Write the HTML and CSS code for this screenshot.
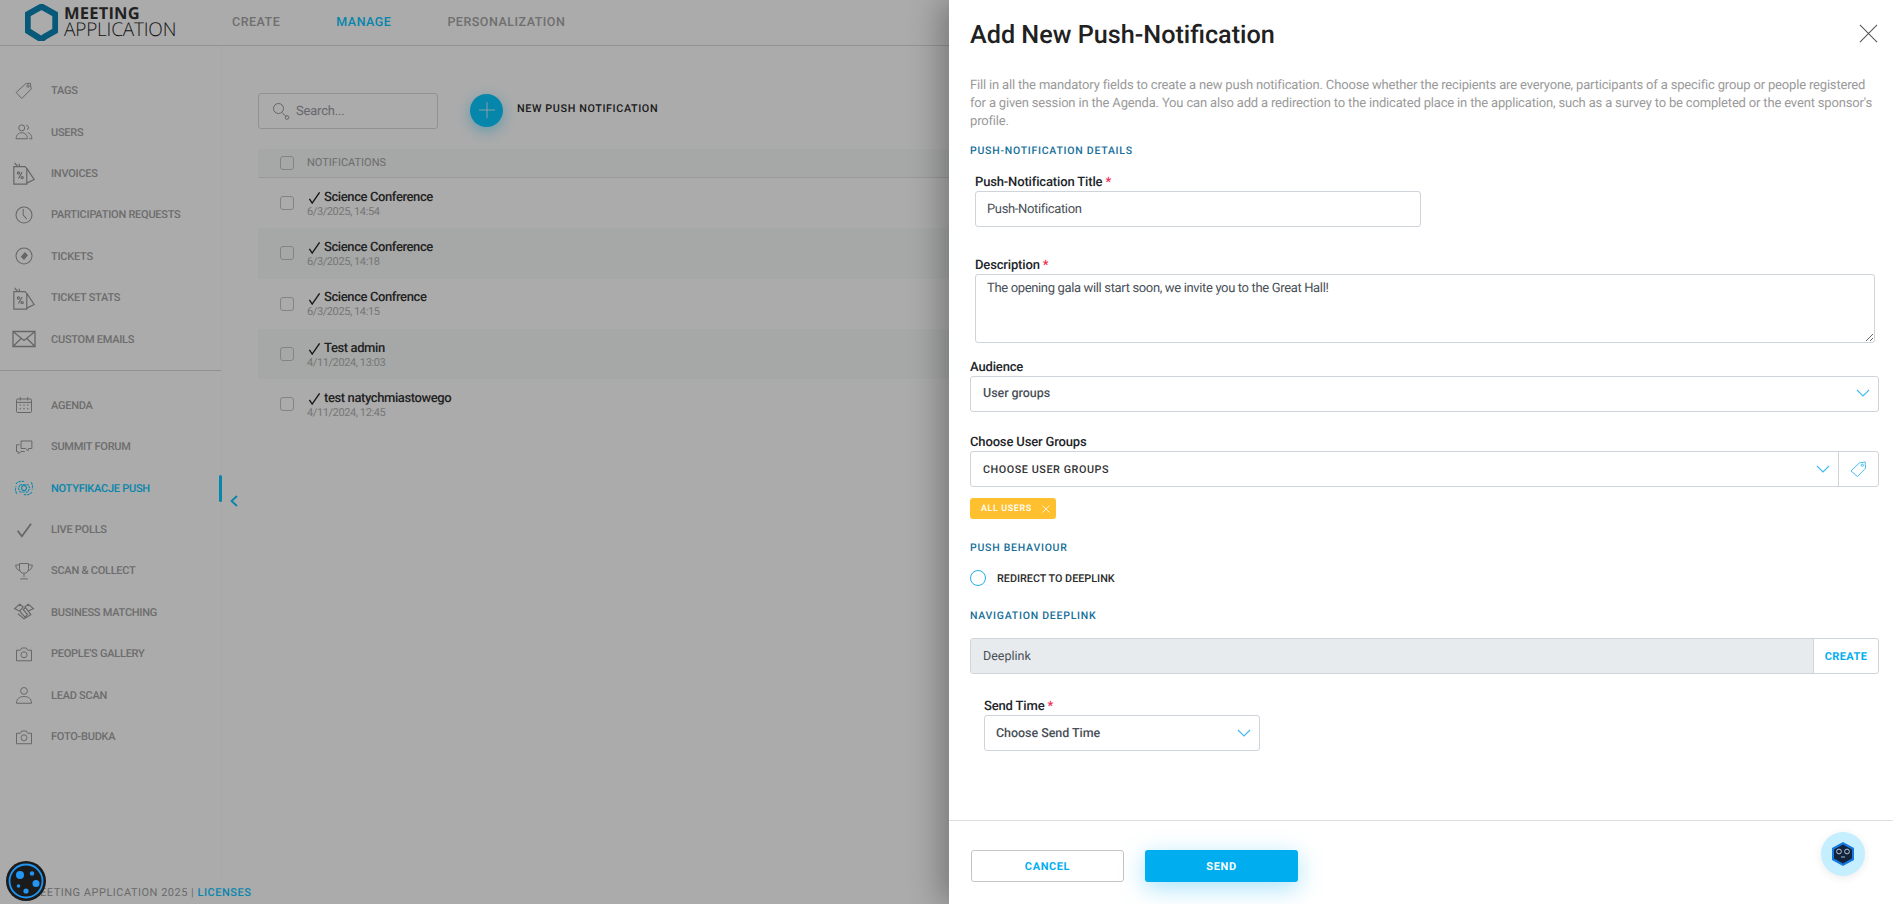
FILE: index.html
```html
<!DOCTYPE html>
<html lang="en">
<head>
<meta charset="utf-8">
<title>Meeting Application</title>
<link rel="stylesheet" href="styles.css">
</head>
<body>
<svg class="defs" width="0" height="0" aria-hidden="true">
  <symbol id="i-tag" viewBox="-4 -4 32 32"><path d="M1.500 14 14 2.500l6.500-1 1 8L9 22z"/><circle cx="17.500" cy="5.500" r="1.600"/></symbol>
  <symbol id="i-users" viewBox="-4 -4 32 32"><circle cx="9" cy="6.500" r="4"/><path d="M1.500 21c0-5 3-8 7.500-8s7.500 3 7.500 8z"/><path d="M15 3c2 .3 3.200 1.800 3 3.500-.2 1.200-1 2-2 2.500M17 13c3.500.8 5.500 3.500 5.500 8H19"/></symbol>
  <symbol id="i-invoice" viewBox="-1 -1 26 26"><path d="M1 5h12l2 2v17H1zM15 7l8 12-8 4M5 4C3 3 2 2 2 1M10 11l-4 7"/><circle cx="6" cy="12" r="1.200"/><circle cx="10" cy="17" r="1.200"/><path d="M7 5V2"/></symbol>
  <symbol id="i-clock" viewBox="-3 -3 30 30"><circle cx="12" cy="12" r="10"/><path d="M11 4.500V12l4.500 5"/></symbol>
  <symbol id="i-ticket" viewBox="-3 -3 30 30"><circle cx="12" cy="12" r="10"/><path class="solid" d="m13 7 4 4-5 6-4-4z"/></symbol>
  <symbol id="i-mail" viewBox="0 0 24 24"><path d="M1 4.500h22v15H1zM1 4.500l11 9 11-9M1 19.500l8-8M23 19.500l-8-8"/></symbol>
  <symbol id="i-calendar" viewBox="-4 -4 32 32"><rect x="2" y="4" width="20" height="18" rx="1.500"/><path d="M7 1.500V6M17 1.500V6M2 8.500h20"/><path class="dots" d="M6 12h2M11 12h2M16 12h2M6 17h2M11 17h2M16 17h2"/></symbol>
  <symbol id="i-chat" viewBox="-4 -4 32 32"><path d="M8 4h14.500v10H18l-.5 3-3.500-3H8z"/><path d="M6 9H2v9h2l.5 3 3.500-3h5"/></symbol>
  <symbol id="i-push" viewBox="-3 -3 30 30"><circle cx="12" cy="12" r="3"/><path d="M7 8h10l2 4-2 5H7l-2-5zM2 7c3-4 8-4 11-3M22 17c-3 4-8 4-11 3M3 19c-2-3-2-6-1-9M21 5c2 3 2 6 1 9" stroke-dasharray="3 1"/></symbol>
  <symbol id="i-check" viewBox="-5 -5 34 34"><path class="thick" d="m3 13 6 8L22 3"/></symbol>
  <symbol id="i-trophy" viewBox="-4 -4 32 32"><path d="M6 2h12v7c0 4-2.500 6-6 6s-6-2-6-6zM6 4H1c0 4 2 7 6 7.500M18 4h5c0 4-2 7-6 7.500M12 15v5M7 22.500h10"/></symbol>
  <symbol id="i-hands" viewBox="-2 -2 28 28"><path d="m1 8 6-5 4 3-4 5zM23 8l-6-5-4 3 4 5zM7 11l6 7 3-3-5-6 3-2 6 8-8 5-7-6"/></symbol>
  <symbol id="i-camera" viewBox="-4 -4 32 32"><path d="M2 7h5l2-3h6l2 3h5v14H2z"/><circle cx="12" cy="13" r="4"/></symbol>
  <symbol id="i-user" viewBox="-4 -4 32 32"><circle cx="12" cy="6.500" r="4.500"/><path d="M2 23c0-6 4-9 10-9s10 3 10 9z"/></symbol>
  <symbol id="i-tick" viewBox="0 0 14 14"><path d="m1.500 8 3 4.500L12.500 1"/></symbol>
  <symbol id="i-chev" viewBox="0 0 14 8"><path d="m1 1 6 6 6-6"/></symbol>
</svg>

<div class="app">
  <header class="topbar">
    <div class="brand">
      <svg class="brand-mark" viewBox="0 0 32 36"><path d="M16 2.500 29.500 10v16L19 32l-3 2.500L2.500 26V10z" fill="none" stroke="#0c85b5" stroke-width="6"/></svg>
      <div class="brand-text"><span class="brand-top">MEETING</span><span class="brand-bottom">APPLICATION</span></div>
    </div>
    <nav class="topnav">
      <a class="topnav-link">CREATE</a>
      <a class="topnav-link is-active">MANAGE</a>
      <a class="topnav-link">PERSONALIZATION</a>
    </nav>
  </header>

  <div class="layout">
    <aside class="sidebar">
      <ul class="menu menu-first">
        <li class="menu-item"><svg class="menu-icon"><use href="#i-tag"/></svg>TAGS</li>
        <li class="menu-item"><svg class="menu-icon"><use href="#i-users"/></svg>USERS</li>
        <li class="menu-item"><svg class="menu-icon"><use href="#i-invoice"/></svg>INVOICES</li>
        <li class="menu-item"><svg class="menu-icon"><use href="#i-clock"/></svg>PARTICIPATION REQUESTS</li>
        <li class="menu-item"><svg class="menu-icon"><use href="#i-ticket"/></svg>TICKETS</li>
        <li class="menu-item"><svg class="menu-icon"><use href="#i-invoice"/></svg>TICKET STATS</li>
        <li class="menu-item"><svg class="menu-icon"><use href="#i-mail"/></svg>CUSTOM EMAILS</li>
      </ul>
      <ul class="menu menu-second">
        <li class="menu-item"><svg class="menu-icon"><use href="#i-calendar"/></svg>AGENDA</li>
        <li class="menu-item"><svg class="menu-icon"><use href="#i-chat"/></svg>SUMMIT FORUM</li>
        <li class="menu-item is-active"><svg class="menu-icon"><use href="#i-push"/></svg>NOTYFIKACJE PUSH</li>
        <li class="menu-item"><svg class="menu-icon"><use href="#i-check"/></svg>LIVE POLLS</li>
        <li class="menu-item"><svg class="menu-icon"><use href="#i-trophy"/></svg>SCAN &amp; COLLECT</li>
        <li class="menu-item"><svg class="menu-icon"><use href="#i-hands"/></svg>BUSINESS MATCHING</li>
        <li class="menu-item"><svg class="menu-icon"><use href="#i-camera"/></svg>PEOPLE'S GALLERY</li>
        <li class="menu-item"><svg class="menu-icon"><use href="#i-user"/></svg>LEAD SCAN</li>
        <li class="menu-item"><svg class="menu-icon"><use href="#i-camera"/></svg>FOTO-BUDKA</li>
      </ul>
    </aside>

    <main class="content">
      <svg class="collapse" viewBox="0 0 8 12"><path d="M7 1 1.500 6 7 11"/></svg>
      <div class="toolbar">
        <div class="search">
          <svg class="search-icon" viewBox="0 0 18 18"><circle cx="6.500" cy="6.500" r="5"/><path d="m10 10.500 4 4"/><circle cx="15" cy="15.500" r="1.800"/></svg>
          <span>Search...</span>
        </div>
        <div class="add-round"><svg viewBox="0 0 20 20"><path d="M10 1v18M1 10h18"/></svg></div>
        <span class="add-label">NEW PUSH NOTIFICATION</span>
      </div>
      <div class="table">
        <div class="table-head"><span class="check"></span><span>NOTIFICATIONS</span></div>
        <div class="row"><span class="check"></span><div class="row-text"><div class="row-title"><svg class="tick"><use href="#i-tick"/></svg>Science Conference</div><div class="row-date">6/3/2025, 14:54</div></div></div>
        <div class="row is-shaded"><span class="check"></span><div class="row-text"><div class="row-title"><svg class="tick"><use href="#i-tick"/></svg>Science Conference</div><div class="row-date">6/3/2025, 14:18</div></div></div>
        <div class="row"><span class="check"></span><div class="row-text"><div class="row-title"><svg class="tick"><use href="#i-tick"/></svg>Science Confrence</div><div class="row-date">6/3/2025, 14:15</div></div></div>
        <div class="row is-shaded"><span class="check"></span><div class="row-text"><div class="row-title"><svg class="tick"><use href="#i-tick"/></svg>Test admin</div><div class="row-date">4/11/2024, 13:03</div></div></div>
        <div class="row"><span class="check"></span><div class="row-text"><div class="row-title"><svg class="tick"><use href="#i-tick"/></svg>test natychmiastowego</div><div class="row-date">4/11/2024, 12:45</div></div></div>
      </div>
    </main>
  </div>

  <footer class="pagefoot">MEETING APPLICATION 2025 | <a class="pagefoot-link">LICENSES</a></footer>
</div>

<div class="backdrop"></div>

<aside class="drawer">
  <div class="drawer-body">
    <div class="drawer-head">
      <h1 class="drawer-title">Add New Push-Notification</h1>
      <svg class="close" viewBox="0 0 20 20"><path d="m1 1 18 18M19 1 1 19"/></svg>
    </div>
    <p class="intro">Fill in all the mandatory fields to create a new push notification. Choose whether the recipients are everyone, participants of a specific group or people registered for a given session in the Agenda. You can also add a redirection to the indicated place in the application, such as a survey to be completed or the event sponsor's profile.</p>

    <h2 class="section s-details">PUSH-NOTIFICATION DETAILS</h2>
    <div class="field f-title">
      <label class="label">Push-Notification Title <b class="req">*</b></label>
      <input class="control" type="text" placeholder="Push-Notification">
    </div>
    <div class="field f-desc">
      <label class="label">Description <b class="req">*</b></label>
      <textarea class="control area" placeholder="The opening gala will start soon, we invite you to the Great Hall!"></textarea>
    </div>
    <div class="field f-aud">
      <label class="label">Audience</label>
      <div class="control select"><span class="select-value">User groups</span><svg class="chev"><use href="#i-chev"/></svg></div>
    </div>
    <div class="field f-groups">
      <label class="label">Choose User Groups</label>
      <div class="control group">
        <div class="group-main"><span class="group-value">CHOOSE USER GROUPS</span><svg class="chev"><use href="#i-chev"/></svg></div>
        <div class="group-side"><svg class="side-tag" viewBox="0 0 18 18"><path d="M1 10.500 10 2l6-1 .5 6.500L8 16.500z"/><circle cx="13" cy="4.500" r="1.200"/></svg></div>
      </div>
    </div>
    <div class="chip">ALL USERS<svg class="chip-x" viewBox="0 0 8 8"><path d="m.5.500 7 7M7.500.500l-7 7"/></svg></div>

    <h2 class="section s-behaviour">PUSH BEHAVIOUR</h2>
    <div class="radio-row"><span class="radio"></span><span class="radio-label">REDIRECT TO DEEPLINK</span></div>

    <h2 class="section s-deeplink">NAVIGATION DEEPLINK</h2>
    <div class="control group deeplink">
      <div class="deeplink-value">Deeplink</div>
      <div class="deeplink-action">CREATE</div>
    </div>

    <div class="field f-send">
      <label class="label">Send Time <b class="req">*</b></label>
      <div class="control select"><span class="select-value">Choose Send Time</span><svg class="chev"><use href="#i-chev"/></svg></div>
    </div>
  </div>
  <div class="drawer-foot">
    <button class="btn btn-ghost" type="button">CANCEL</button>
    <button class="btn btn-solid" type="button">SEND</button>
  </div>
</aside>

<div class="bot">
  <svg viewBox="0 0 24 26" width="24" height="26">
    <path d="M12 1 23 7v12l-11 6L1 19V7z" fill="#1479e0"/>
    <path d="M12 3.500 21 8.500v9l-9 5-9-5v-9z" fill="#13233c"/>
    <circle cx="8" cy="10.500" r="2.400" fill="none" stroke="#b8c8d8"/>
    <circle cx="16" cy="10.500" r="2.400" fill="none" stroke="#b8c8d8"/>
    <path d="M10 16h4" stroke="#8fa3b8" stroke-width="1.200"/>
  </svg>
</div>

<div class="orb">
  <svg viewBox="0 0 40 40" width="40" height="40">
    <circle cx="20" cy="20" r="20" fill="#1b1b1b"/>
    <circle cx="20" cy="20" r="16.500" fill="none" stroke="#2196f3" stroke-width="1.800"/>
    <circle cx="14" cy="14" r="4" fill="#2196f3"/>
    <circle cx="26" cy="12.500" r="2.200" fill="#2196f3"/>
    <circle cx="30" cy="22.500" r="3.500" fill="#2196f3"/>
    <circle cx="20" cy="30" r="2.600" fill="#2196f3"/>
    <circle cx="12.500" cy="25" r="1.800" fill="#2196f3"/>
  </svg>
</div>
</body>
</html>
```
FILE: styles.css
```css
* { box-sizing: border-box; }
html, body { height: 100%; }
body {
  margin: 0;
  font-family: Roboto, "Liberation Sans", sans-serif;
  background: #fff;
  overflow: hidden;
  color: #212529;
  position: relative;
  text-rendering: geometricPrecision;
}
.defs { position: absolute; }
svg { display: block; }

.app { height: 100vh; display: flex; flex-direction: column; background: #fff; }

/* top bar */
.topbar {
  flex: 0 0 46px;
  display: flex;
  align-items: center;
  padding-left: 25px;
  background: #fff;
  border-bottom: 1px solid #dcdcdc;
}
.brand { width: 207px; display: flex; align-items: center; gap: 6px; }
.brand-mark { width: 33px; height: 37px; margin-top: -1px; }
.brand-text { display: flex; flex-direction: column; color: #333; font-family: "Open Sans", sans-serif; margin-top: -2px; }
.brand-top { font-size: 16.500px; font-weight: 700; line-height: 15px; letter-spacing: .2px; }
.brand-bottom { font-size: 19px; font-weight: 300; line-height: 18px; color: #222; letter-spacing: -.2px; }
.topnav { display: flex; gap: 56px; }
.topnav-link { font-size: 12.500px; font-weight: 500; letter-spacing: .5px; color: #a6a6a6; }
.topnav-link.is-active { color: #0ac8ff; }

/* layout */
.layout { flex: 1; display: flex; min-height: 0; }
.sidebar { flex: 0 0 222px; background: #fff; border-right: 1px solid #fbfbfb; }
.menu { list-style: none; margin: 0; }
.menu-first { padding: 24px 0 10px; border-bottom: 1px solid #d9d9d9; }
.menu-second { padding: 14px 0 0; }
.menu-item {
  height: 41.400px;
  display: flex;
  align-items: center;
  gap: 15px;
  padding-left: 12px;
  font-size: 11px;
  letter-spacing: -.25px;
  font-weight: 500;
  color: #a3a3a3;
  position: relative;
}
.menu-item.is-active { color: #0ac8ff; }
.menu-item.is-active::after {
  content: "";
  position: absolute;
  right: -1px;
  top: 7px;
  width: 3px;
  height: 27px;
  border-radius: 2px;
  background: #0ac8ff;
}
.menu-icon { width: 24px; height: 24px; fill: none; stroke: currentColor; stroke-width: 1.300; color: #999; }
.menu-item.is-active .menu-icon { color: #0ac8ff; }
.solid { fill: currentColor; stroke: none; }
.dots { stroke-dasharray: 2 0; stroke-width: 1.500; }
.thick { stroke-width: 2.400; }

/* content */
.content { flex: 1; min-width: 0; padding: 47px 0 0 36px; position: relative; }
.collapse {
  position: absolute; left: 8px; top: 449px; width: 8px; height: 12px;
  fill: none; stroke: #0ac8ff; stroke-width: 1.800;
}
.toolbar { display: flex; align-items: center; height: 36px; }
.search {
  width: 180px; height: 36px;
  display: flex; align-items: center; gap: 6px;
  padding-left: 13px;
  border: 1px solid #d6d8de;
  border-radius: 3px;
  font-size: 13px;
  letter-spacing: -.2px;
  color: #9a9ca3;
}
.search-icon { width: 18px; height: 18px; fill: none; stroke: #999; stroke-width: 1; }
.add-round {
  width: 33px; height: 33px; margin: -2px 0 0 32px;
  border-radius: 50%;
  background: #0ac8ff;
  box-shadow: 0 4px 14px rgba(10, 200, 255, .45);
  display: flex; align-items: center; justify-content: center;
}
.add-round svg { width: 18px; height: 18px; fill: none; stroke: #d9f5ff; stroke-width: 1; }
.add-label { margin: -5px 0 0 14px; font-size: 10.800px; font-weight: 500; letter-spacing: .6px; color: #2b2b2b; }

.table { margin-top: 20px; }
.table-head {
  height: 29px;
  display: flex; align-items: center; gap: 13px;
  padding: 0 0 1px 22px;
  background: #f8faf9;
  border-bottom: 1px solid #e5e5e5;
  font-size: 11px;
  color: #a3a3a3;
}
.row { height: 50.300px; display: flex; align-items: center; gap: 13px; padding-left: 22px; }
.row.is-shaded { background: #f8faf9; }
.check { width: 14px; height: 14px; border: 1px solid #c4c4c4; border-radius: 3px; flex: none; background: #fff0; }
.row-text { padding-top: 1px; }
.row-title { display: flex; align-items: center; font-size: 13px; letter-spacing: -.4px; font-weight: 500; color: #333; line-height: 16px; }
.row-date { font-size: 11px; letter-spacing: -.4px; color: #b0b0b0; line-height: 13px; margin-top: -1px; }
.tick { width: 13px; height: 14px; margin: 1px 3px 0 1px; fill: none; stroke: #222; stroke-width: 1.500; }

.pagefoot {
  flex: 0 0 24px;
  padding: 6px 0 0 30px;
  font-size: 11px;
  letter-spacing: .5px;
  color: #9f9f9f;
  background: #fff;
}
.pagefoot-link { color: #0ac8ff; font-weight: 500; }

/* overlay */
.backdrop { position: absolute; inset: 0; background: rgba(0, 0, 0, .33); }

.drawer {
  position: absolute; top: 0; right: 0; bottom: 0;
  width: 944px;
  background: #fff;
  display: flex; flex-direction: column;
  box-shadow: -8px 0 30px rgba(0, 0, 0, .3);
}
.drawer-body { flex: 1; padding: 22px 14px 0 21px; min-height: 0; }
.drawer-head { display: flex; justify-content: space-between; height: 28px; }
.drawer-title { margin: 0; font-size: 25.200px; font-weight: 500; line-height: 28px; color: #212121; }
.close { width: 19px; height: 19px; margin: 2px 0 0; position: relative; left: -1px; fill: none; stroke: #555; stroke-width: 1.100; }
.intro { margin: 27px 0 0; font-size: 13px; letter-spacing: -.17px; line-height: 18px; color: #9a9a9a; }

.section { margin: 0; font-size: 10.500px; line-height: 14px; font-weight: 500; letter-spacing: .75px; color: #156f99; }
.s-details { margin-top: 13px; }
.s-behaviour { margin-top: 22px; }
.s-deeplink { margin-top: 23px; }

.field { display: block; }
.label { display: block; padding-top: 1px; font-size: 13px; letter-spacing: -.15px; font-weight: 500; line-height: 16px; color: #212529; }
.req { color: #ef2b4d; font-weight: 500; }
.control {
  display: block;
  width: 100%;
  border: 1px solid #ced4da;
  border-radius: 3px;
  background: #fff;
  font-family: inherit;
  font-size: 13px;
  letter-spacing: -.35px;
  color: #495057;
  outline: none;
}
.control::placeholder { color: #495057; opacity: 1; }
input.control { height: 36px; padding: 0 11px; margin-top: 0; text-rendering: geometricPrecision; }
.area { height: 69px; padding: 6px 11px; margin-top: 0; line-height: 16px; text-rendering: geometricPrecision; }
.f-title { margin: 16px 0 0 5px; width: 446px; }
.f-desc { margin: 30px 4px 0 5px; }
.f-aud { margin-top: 16px; }
.f-groups { margin-top: 22px; }
.f-send { margin: 24px 0 0 14px; width: 276px; }

.select { height: 36px; display: flex; align-items: center; justify-content: space-between; padding: 0 8px 2px 12px; }
.f-send .select { padding-bottom: 0; padding-left: 11px; }
.select-value { font-size: 12.500px; letter-spacing: -.05px; font-weight: 500; color: #495057; }
.chev { width: 14px; height: 8px; fill: none; stroke: #3fb9ee; stroke-width: 1.100; }

.group { height: 36px; display: flex; overflow: hidden; }
.group-main { flex: 1; display: flex; align-items: center; justify-content: space-between; padding: 0 8px 0 12px; }
.group-value { font-size: 10.800px; font-weight: 500; letter-spacing: .55px; color: #333; }
.group-side { width: 40px; display: flex; align-items: center; justify-content: center; border-left: 1px solid #ced4da; }
.side-tag { width: 17px; height: 17px; fill: none; stroke: #3fb9ee; stroke-width: 1; }

.chip {
  width: 86px; height: 21px; margin-top: 11px;
  display: flex; align-items: center; gap: 10px;
  padding-left: 11px;
  background: #ffc030;
  border-radius: 3px;
  font-size: 9px; font-weight: 500; letter-spacing: .6px; color: #fff;
}
.chip-x { width: 8px; height: 8px; fill: none; stroke: #fff; stroke-width: .8; }

.radio-row { display: flex; align-items: center; gap: 11px; margin-top: 15px; height: 16px; }
.radio { width: 16px; height: 16px; border: 1px solid #1eaeea; border-radius: 50%; }
.radio-label { font-size: 10.800px; font-weight: 500; color: #2b2b2b; }

.deeplink { margin-top: 15px; }
.deeplink-value { flex: 1; background: #e8ebee; display: flex; align-items: center; padding-left: 12px; color: #495057; font-size: 12.500px; letter-spacing: 0; }
.deeplink-action {
  width: 65px; display: flex; align-items: center; justify-content: center;
  border-left: 1px solid #ced4da;
  font-size: 11px; font-weight: 700; letter-spacing: .4px; color: #00aeef;
}

.drawer-foot {
  flex: 0 0 84px;
  display: flex; gap: 21px;
  padding: 29px 0 0 22px;
  border-top: 1px solid #dedede;
}
.btn {
  width: 153px; height: 32px;
  border-radius: 3px;
  font-family: inherit; font-size: 11px; font-weight: 700; letter-spacing: .6px;
  text-rendering: geometricPrecision;
}
.btn-ghost { background: #fff; border: 1px solid #c4c4c4; color: #00aeef; }
.btn-solid { background: #00aeef; border: 0; color: #fff; box-shadow: 0 6px 24px rgba(0, 174, 239, .35); }

.bot {
  position: absolute; left: 1821px; top: 832px;
  width: 44px; height: 44px; border-radius: 50%;
  background: #c5eeff;
  display: flex; align-items: center; justify-content: center;
  box-shadow: 0 2px 10px rgba(0, 0, 0, .08);
}
.orb { position: absolute; left: 6px; top: 861px; width: 41px; height: 41px; }
```
